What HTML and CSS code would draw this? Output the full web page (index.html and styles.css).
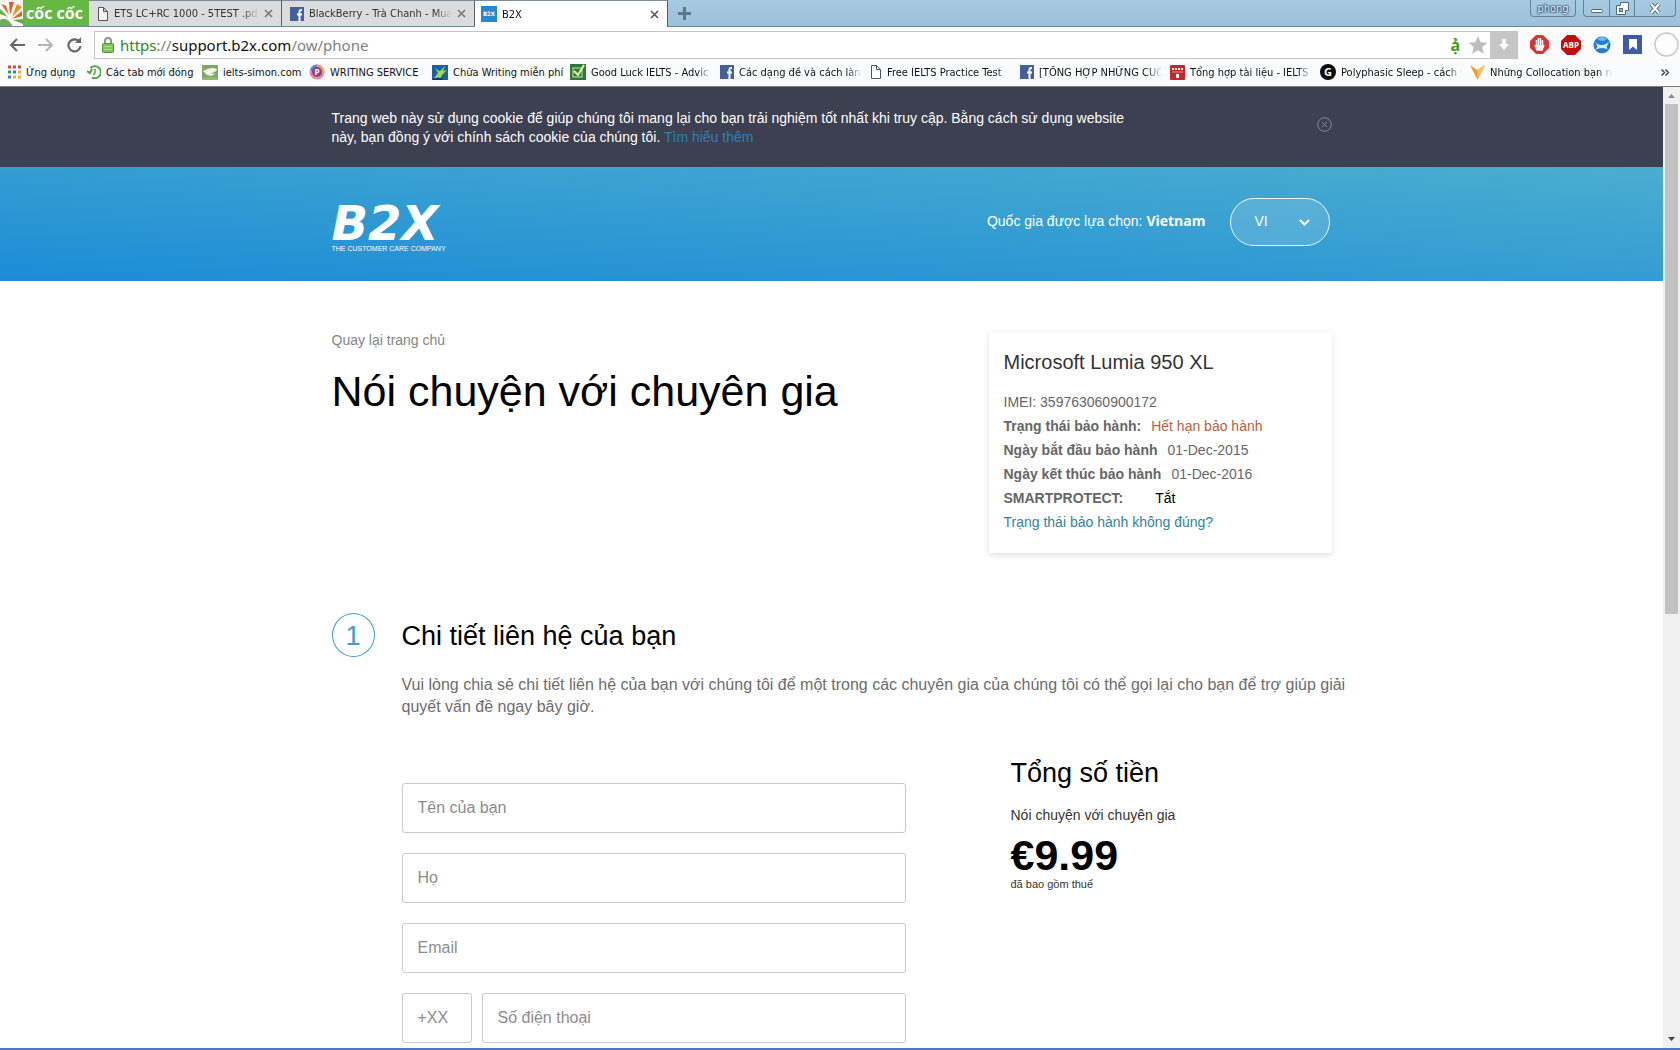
FILE: index.html
```
<!DOCTYPE html>
<html lang="vi">
<head>
  <meta charset="UTF-8" />
  <meta name="viewport" content="width=device-width, initial-scale=1.0" />
  <title>B2X</title>
  <link rel="stylesheet" href="styles.css">
</head>
<body>
<div class="tabstrip">
  <div class="brand">
    <svg width="23" height="26" viewBox="0 0 23 26"><rect width="23" height="26" fill="#fbfaf0"/><path d="M0 20Q6 16 12 25L12 26H0Z" fill="#6fae5b"/><path d="M1 4l5 2 3 9z" fill="#e4572e"/><path d="M9 2h5l-4 13z" fill="#e4572e"/><path d="M17 4l5 3-10 10z" fill="#f08a24"/><path d="M22 11v5l-10 3z" fill="#e2632c"/><path d="M13 20l10-1v5z" fill="#5fae3b"/><path d="M0 9l8 8-8-3z" fill="#5fae3b"/></svg>
    <span>cốc cốc</span>
  </div>
  <div class="tab">
    <svg width="12" height="14" viewBox="0 0 12 14"><path d="M1.500.5h5l4 4v9h-9zM6.500 .5v4h4" fill="#f4f4f4" stroke="#555"/></svg>
    <span class="fade">ETS LC+RC 1000 - 5TEST .pd</span>
    <button aria-label="Close tab"><svg width="9" height="9" viewBox="0 0 9 9"><path d="M1 1l7 7M8 1L1 8" stroke="#777" stroke-width="1.600"/></svg></button>
  </div>
  <div class="tab">
    <svg width="14" height="14" viewBox="0 0 14 14"><rect width="14" height="14" fill="#43609c"/><path d="M12 3H10.500Q9.500 3 9.500 4.500V14M7 7.500H12" fill="none" stroke="#fff" stroke-width="2"/></svg>
    <span class="fade">BlackBerry - Trà Chanh - Mua</span>
    <button aria-label="Close tab"><svg width="9" height="9" viewBox="0 0 9 9"><path d="M1 1l7 7M8 1L1 8" stroke="#777" stroke-width="1.600"/></svg></button>
  </div>
  <div class="tab active">
    <span class="b2x-icon">B2X</span>
    <span class="fade">B2X</span>
    <button aria-label="Close tab"><svg width="9" height="9" viewBox="0 0 9 9"><path d="M1 1l7 7M8 1L1 8" stroke="#555" stroke-width="1.600"/></svg></button>
  </div>
  <button class="new-tab" aria-label="New tab"><svg width="13" height="13" viewBox="0 0 13 13"><path d="M6.500 0v13M0 6.500h13" stroke="#5f7786" stroke-width="3"/></svg></button>
  <div class="window-tools">
    <button class="user">phong</button>
    <div class="window-buttons">
      <button aria-label="Minimize"><svg width="12" height="14" viewBox="0 0 12 14"><rect x=".5" y="8.500" width="11" height="3" rx="1" fill="#fff" stroke="#4d6878"/></svg></button>
      <button aria-label="Restore"><svg width="13" height="13" viewBox="0 0 13 13"><path d="M4.500 .5h8v8h-3v4h-9v-9h4z" fill="#fff" stroke="#4d6878"/><rect x="3.500" y="6.500" width="3" height="3" fill="#9ec4dc" stroke="#4d6878"/></svg></button>
      <button aria-label="Close"><svg width="12" height="11" viewBox="0 0 12 11"><path d="M2 1l8 9M10 1L2 10" stroke="#4d6878" stroke-width="4"/><path d="M2 1l8 9M10 1L2 10" stroke="#fff" stroke-width="2"/></svg></button>
    </div>
  </div>
</div>

<div class="toolbar">
  <div class="nav-buttons">
    <button aria-label="Back"><svg width="16" height="14" viewBox="0 0 16 14"><path d="M16 7H2M8 1L2 7l6 6" fill="none" stroke="#666" stroke-width="2"/></svg></button>
    <button aria-label="Forward"><svg width="16" height="14" viewBox="0 0 16 14"><path d="M0 7h14M8 1l6 6-6 6" fill="none" stroke="#b4b4b4" stroke-width="2"/></svg></button>
    <button aria-label="Reload"><svg width="15" height="16" viewBox="0 0 15 16"><path d="M13.500 9A6 6 0 1 1 11 3.500" fill="none" stroke="#666" stroke-width="2.200"/><path d="M14 0v6H8z" fill="#666"/></svg></button>
  </div>
  <div class="address">
    <svg width="12" height="16" viewBox="0 0 12 16"><path d="M3 7V4a3 3 0 0 1 6 0v3" fill="none" stroke="#8a9a80" stroke-width="2"/><rect x=".5" y="6.500" width="11" height="9" rx="1" fill="#7cc65a" stroke="#4f9b37"/><path d="M2 9.500h8M2 12.500h8" stroke="#a8de8e"/></svg>
    <p class="url"><span class="secure">https</span>://<span class="host">support.b2x.com</span>/ow/phone</p>
    <span class="accent">ạ̉</span>
    <svg class="star" width="20" height="18" viewBox="0 0 20 18"><path d="M10 0l2.600 6.200 6.900.5-5.300 4.400 1.700 6.700L10 14.200l-5.900 3.600 1.700-6.700L.5 6.700l6.900-.5z" fill="#bdbdbd"/></svg>
    <button class="download" aria-label="Download"><svg width="10" height="11" viewBox="0 0 10 11"><path d="M3 0h4v5h3l-5 6-5-6h3z" fill="#fff"/></svg></button>
  </div>
  <div class="extensions">
    <svg width="19" height="19" viewBox="0 0 19 19"><path d="M6 0h7l6 6v7l-6 6H6l-6-6V6z" fill="#dc3338"/><path d="M6.500 10V5M8.500 10V3M10.500 10V3M12.500 11V5M5 10l2 5h5l2-5" stroke="#fff" stroke-width="1.500" fill="#fff"/></svg>
    <svg width="20" height="20" viewBox="0 0 20 20"><path d="M6 0h8l6 6v8l-6 6H6l-6-6V6z" fill="#c40d0d"/><text x="10" y="13" text-anchor="middle" class="abp">ABP</text></svg>
    <svg width="18" height="18" viewBox="0 0 18 18"><circle cx="9" cy="9" r="8.500" fill="#1e7fd0"/><path d="M4 3Q9-1 14 3Q10 7 4 3" fill="#69bdf2"/><path d="M1 5Q8 13 17 5Q11 12 16 14Q9 10 2 14Q7 11 1 5" fill="#d8eefc"/></svg>
    <svg width="19" height="19" viewBox="0 0 19 19"><rect width="19" height="19" fill="#3f5ba5"/><path d="M6 4h8v11l-4-3.500L6 15z" fill="#fff"/></svg>
    <svg width="25" height="25" viewBox="0 0 25 25"><circle cx="12.500" cy="12.500" r="11.500" fill="#fdfdfd" stroke="#c9c9c9" stroke-width="1.500"/></svg>
  </div>
</div>

<div class="bookmarks">
  <a href="#"><svg width="14" height="14" viewBox="0 0 14 14"><path d="M1 2h3M6 2h3M11 2h3" stroke="#db4a38" stroke-width="3"/><path d="M1 7h3" stroke="#3d9a4b" stroke-width="3"/><path d="M6 7h3M1 12h3" stroke="#3b76d8" stroke-width="3"/><path d="M11 7h3M6 12h3M11 12h3" stroke="#eab030" stroke-width="3"/></svg><span>Ứng dụng</span></a>
  <a href="#"><svg width="14" height="14" viewBox="0 0 14 14"><path d="M3.500 3A6 6 0 1 1 5 12.500M0 6l3 2 2-4" fill="none" stroke="#56a146" stroke-width="2"/><path d="M8 4v4l-2 2" fill="none" stroke="#56a146" stroke-width="1.500"/></svg><span>Các tab mới đóng</span></a>
  <a href="#"><svg width="16" height="15" viewBox="0 0 16 15"><rect width="16" height="15" fill="#7fa865"/><path d="M1 6Q9 1 15 4Q14 8 8 8l5 1q-3 3-8 1z" fill="#f1f6ea"/><path d="M0 13q8-3 16 0v2H0z" fill="#94ba72"/></svg><span>ielts-simon.com</span></a>
  <a href="#"><svg width="16" height="16" viewBox="0 0 16 16"><circle cx="8" cy="8" r="7.500" fill="#e889a2"/><path d="M8 .5A7.500 7.500 0 0 1 15 10L8 8z" fill="#f3a34e"/><path d="M1 6A7.500 7.500 0 0 1 8 .5V8z" fill="#5d86d4"/><circle cx="8" cy="8" r="5" fill="#8e3e91"/><text x="8" y="11" text-anchor="middle" class="small-mark">P</text></svg><span>WRITING SERVICE</span></a>
  <a href="#"><svg width="16" height="15" viewBox="0 0 16 15"><rect width="16" height="15" fill="#17639e"/><path d="M2 13l4-5-3-5 4 3 1 0 5-5-2 5 4-1-5 5-2 4z" fill="#a3d552"/><path d="M0 15q6-5 12 0z" fill="#0b3a6b"/></svg><span>Chữa Writing miễn phí</span></a>
  <a href="#"><svg width="16" height="16" viewBox="0 0 16 16"><rect width="16" height="16" fill="#2e7a3c"/><rect x="3" y="4" width="9" height="9" fill="none" stroke="#c7e8b1"/><path d="M4 7l4 4 6-10" fill="none" stroke="#e9f59c" stroke-width="2"/></svg><span class="fade">Good Luck IELTS - Advic</span></a>
  <a href="#"><svg width="14" height="14" viewBox="0 0 14 14"><rect width="14" height="14" fill="#43609c"/><path d="M12 3H10.500Q9.500 3 9.500 4.500V14M7 7.500H12" fill="none" stroke="#fff" stroke-width="2"/></svg><span class="fade">Các dạng đề và cách làn</span></a>
  <a href="#"><svg width="12" height="14" viewBox="0 0 12 14"><path d="M1.500 .5h5l4 4v9h-9zM6.500 .5v4h4" fill="#fff" stroke="#555"/></svg><span class="fade">Free IELTS Practice Test</span></a>
  <a href="#"><svg width="14" height="14" viewBox="0 0 14 14"><rect width="14" height="14" fill="#43609c"/><path d="M12 3H10.500Q9.500 3 9.500 4.500V14M7 7.500H12" fill="none" stroke="#fff" stroke-width="2"/></svg><span class="fade">[TỔNG HỢP NHỮNG CUỐ</span></a>
  <a href="#"><svg width="15" height="15" viewBox="0 0 15 15"><rect width="15" height="15" rx="1" fill="#c8252c"/><path d="M2 4h11" stroke="#fff" stroke-width="2" stroke-dasharray="2 1"/><path d="M2 7h11" stroke="#e98a8a"/><rect x="6" y="9" width="3" height="4" fill="#fff"/></svg><span class="fade">Tổng hợp tài liệu - IELTS</span></a>
  <a href="#"><svg width="16" height="16" viewBox="0 0 16 16"><circle cx="8" cy="8" r="8" fill="#0c0c0c"/><text x="8" y="12" text-anchor="middle" class="round-mark">G</text></svg><span class="fade">Polyphasic Sleep - cách v</span></a>
  <a href="#"><svg width="15" height="15" viewBox="0 0 15 15"><path d="M0 0l7.500 5L15 0 7.500 15z" fill="#eda12f"/><path d="M7.500 5v10L15 0z" fill="#f7be5c"/></svg><span class="fade">Những Collocation bạn n</span></a>
  <button class="more" aria-label="More bookmarks"><svg width="8" height="7" viewBox="0 0 8 7"><path d="M.5.5l3 3-3 3M4.500 .5l3 3-3 3" fill="none" stroke="#444" stroke-width="1.500"/></svg></button>
</div>

<div class="viewport">
  <div class="page">
    <div class="cookie-bar">
      <div class="wrap">
        <p>Trang web này sử dụng cookie để giúp chúng tôi mang lại cho bạn trải nghiệm tốt nhất khi truy cập. Bằng cách sử dụng website này, bạn đồng ý với chính sách cookie của chúng tôi. <a href="#">Tìm hiểu thêm</a></p>
        <button aria-label="Close"><svg width="15" height="15" viewBox="0 0 15 15"><circle cx="7.500" cy="7.500" r="6.800" fill="none" stroke="#878a96"/><path d="M5 5l5 5M10 5l-5 5" stroke="#878a96"/></svg></button>
      </div>
    </div>
    <header class="site-header">
      <div class="wrap">
        <a class="logo" href="#">
          <span class="logo-name">B2X</span>
          <span class="logo-tagline">THE CUSTOMER CARE COMPANY</span>
        </a>
        <div class="region">
          <label for="language">Quốc gia được lựa chọn: <strong>Vietnam</strong></label>
          <div class="select-box">
            <select id="language"><option>VI</option><option>EN</option></select>
            <svg width="11" height="7" viewBox="0 0 11 7"><path d="M1 1l4.500 4.500L10 1" fill="none" stroke="#fff" stroke-width="2"/></svg>
          </div>
        </div>
      </div>
    </header>
    <main class="wrap">
      <section class="intro">
        <div>
          <a class="back" href="#">Quay lại trang chủ</a>
          <h1>Nói chuyện với chuyên gia</h1>
        </div>
        <div class="device-card">
          <h2>Microsoft Lumia 950 XL</h2>
          <p>IMEI: 359763060900172</p>
          <p><strong>Trạng thái bảo hành:</strong><span class="expired">Hết hạn bảo hành</span></p>
          <p><strong>Ngày bắt đầu bảo hành</strong><span>01-Dec-2015</span></p>
          <p><strong>Ngày kết thúc bảo hành</strong><span>01-Dec-2016</span></p>
          <p class="protect"><strong>SMARTPROTECT:</strong><span>Tắt</span></p>
          <a href="#">Trạng thái bảo hành không đúng?</a>
        </div>
      </section>
      <section class="step">
        <div class="step-number">1</div>
        <div class="step-body">
          <h2>Chi tiết liên hệ của bạn</h2>
          <p class="lead">Vui lòng chia sẻ chi tiết liên hệ của bạn với chúng tôi để một trong các chuyên gia của chúng tôi có thể gọi lại cho bạn để trợ giúp giải quyết vấn đề ngay bây giờ.</p>
          <div class="columns">
            <form>
              <input type="text" aria-label="Tên của bạn" placeholder="Tên của bạn" />
              <input type="text" aria-label="Họ" placeholder="Họ" />
              <input type="email" aria-label="Email" placeholder="Email" />
              <div class="phone">
                <input type="text" class="code" aria-label="+XX" placeholder="+XX" />
                <input type="tel" aria-label="Số điện thoại" placeholder="Số điện thoại" />
              </div>
            </form>
            <aside>
              <h2>Tổng số tiền</h2>
              <p>Nói chuyện với chuyên gia</p>
              <p class="price">€9.99</p>
              <p class="tax">đã bao gồm thuế</p>
            </aside>
          </div>
        </div>
      </section>
    </main>
  </div>
  <div class="scrollbar">
    <svg width="7" height="4" viewBox="0 0 7 4"><path d="M0 4L3.500 0 7 4z" fill="#8b8b8b"/></svg>
    <div class="track"><div class="thumb"></div></div>
    <svg width="7" height="4" viewBox="0 0 7 4"><path d="M0 0h7L3.500 4z" fill="#444"/></svg>
  </div>
</div>
</body>
</html>
```
FILE: styles.css
```
:root {
  --chrome-font: "DejaVu Sans Condensed", "DejaVu Sans", sans-serif;
  --page-font: "Liberation Sans", Arial, sans-serif;
  --blue: #3d9cc8;
}
* {
  box-sizing: border-box;
}
html, body {
  margin: 0;
  padding: 0;
}
body {
  height: 100vh;
  display: flex;
  flex-direction: column;
  overflow: hidden;
  font-family: var(--page-font);
  font-size: 14px;
  background: #fff;
  color: #000;
  border-bottom: 2px solid #4a76c4;
}
h1, h2, p {
  margin: 0;
  font-weight: normal;
}
a {
  text-decoration: none;
}
button {
  display: flex;
  align-items: center;
  justify-content: center;
  padding: 0;
  border: none;
  background: none;
  cursor: pointer;
}
svg {
  flex: none;
}

/* tabs */
.tabstrip {
  display: flex;
  height: 27px;
  flex: none;
  background: linear-gradient(#a6cbe2, #9bc0d8);
  border-bottom: 1px solid #6d8797;
  font-family: var(--chrome-font);
  font-size: 11px;
}
.brand {
  display: flex;
  width: 89px;
  align-items: center;
  gap: 3px;
  background: #66b844;
  color: #fff;
  font-family: "Open Sans", sans-serif;
  font-size: 16px;
  font-weight: bold;
  line-height: 26px;
  white-space: nowrap;
}
.tab {
  display: flex;
  align-items: center;
  gap: 5px;
  width: 193px;
  padding: 0 8px;
  background: #dcdcdc;
  border-top: 1px solid #7d8f9b;
  border-right: 1px solid #555e66;
  color: #333;
}
.tab.active {
  height: 27px;
  background: #fff;
  color: #111;
  padding-left: 6px;
}
.b2x-icon {
  width: 16px;
  height: 16px;
  background: #2489d0;
  color: #fff;
  font-size: 6px;
  font-weight: bold;
  line-height: 16px;
  text-align: center;
}
.fade {
  flex: 1;
  min-width: 0;
  overflow: hidden;
  white-space: nowrap;
  mask-image: linear-gradient(to right, #000 88%, transparent);
}
.new-tab {
  width: 32px;
}
.window-tools {
  display: flex;
  gap: 7px;
  margin-left: auto;
  padding-right: 4px;
}
.user, .window-buttons {
  height: 17px;
  border: 1px solid #648396;
  border-top: none;
  border-radius: 0 0 4px 4px;
}
.user {
  width: 46px;
  font-family: var(--chrome-font);
  font-size: 11px;
  color: #fff;
  text-shadow: 0 0 2px #223, 0 0 2px #223, 0 0 1px #223;
}
.window-buttons {
  display: grid;
  grid-template-columns: 25px 25px 41px;
}
.window-buttons button + button {
  border-left: 1px solid #648396;
}

/* toolbar */
.toolbar {
  display: flex;
  align-items: center;
  height: 35px;
  flex: none;
  padding-right: 1px;
  background: #fcfcfc;
}
.nav-buttons {
  display: flex;
  gap: 13px;
  width: 94px;
  padding-left: 9px;
}
.address {
  display: flex;
  flex: 1;
  align-items: center;
  height: 28px;
  padding-left: 7px;
  border: 1px solid #c4c4c4;
  background: #fff;
  font-family: "Noto Sans", sans-serif;
  font-size: 15px;
  color: #808080;
}
.url {
  flex: 1;
  padding-left: 6px;
  line-height: 26px;
}
.secure {
  color: #2a8a2a;
}
.host {
  color: #111;
}
.accent {
  color: #3f9c1c;
  font-size: 16px;
  font-weight: bold;
  line-height: 26px;
}
.star {
  margin: 0 2px 0 8px;
}
.download {
  width: 27px;
  height: 26px;
  background: #c6c6c6;
}
.extensions {
  display: flex;
  align-items: center;
  gap: 12px;
  padding-left: 12px;
}
.abp, .small-mark {
  font: bold 8px "Open Sans", sans-serif;
  fill: #fff;
}
.round-mark {
  font: bold 11px "Open Sans", sans-serif;
  fill: #fff;
}

/* bookmarks */
.bookmarks {
  display: grid;
  grid-template-columns: 80px 115px 107px 123px 138px repeat(7, 150px) 1fr;
  align-items: center;
  height: 25px;
  flex: none;
  padding: 0 11px 4px 7px;
  background: #fafbfc;
  border-bottom: 1px solid #7b7d86;
  font-family: var(--chrome-font);
  font-size: 11px;
}
.bookmarks a {
  display: flex;
  align-items: center;
  gap: 5px;
  padding-right: 8px;
  color: #111;
  white-space: nowrap;
}
.more {
  justify-self: end;
}

/* page */
.viewport {
  display: flex;
  flex: 1;
  min-height: 0;
}
.page {
  flex: 1;
  overflow: hidden;
}
.wrap {
  width: 100%;
  max-width: 1000px;
  margin: 0 auto;
}
.cookie-bar {
  padding: 22px 0 20px;
  background: #3c4050;
  color: #fff;
}
.cookie-bar .wrap {
  display: flex;
  justify-content: space-between;
  align-items: flex-start;
}
.cookie-bar p {
  max-width: 815px;
  line-height: 19px;
}
.cookie-bar a {
  color: #2b80b6;
}
.cookie-bar button {
  margin-top: 8px;
}
.site-header {
  background: linear-gradient(to top right, #1c8cd6, #4badcf);
  color: #fff;
}
.site-header .wrap {
  display: flex;
  justify-content: space-between;
  align-items: flex-start;
  height: 114px;
}
.logo {
  display: flex;
  flex-direction: column;
  padding-top: 35px;
  color: #fff;
}
.logo-name {
  font-family: "DejaVu Sans", sans-serif;
  font-size: 48px;
  font-style: italic;
  font-weight: bold;
  line-height: 42px;
}
.logo-tagline {
  font-size: 7px;
  line-height: 10px;
}
.region {
  display: flex;
  align-items: center;
  gap: 24px;
  padding: 31px 2px 0 0;
}
.region label {
  padding-bottom: 4px;
}
.region strong {
  font-family: "Open Sans", sans-serif;
}
.select-box {
  position: relative;
}
.select-box select {
  appearance: none;
  width: 100px;
  height: 48px;
  padding: 0 24px 2px;
  border: 1px solid #e8f5fb;
  border-radius: 24px;
  background: rgba(255, 255, 255, 0.14);
  color: #fff;
  font-family: var(--page-font);
  font-size: 14px;
}
.select-box svg {
  position: absolute;
  right: 20px;
  top: 21px;
  pointer-events: none;
}
.intro {
  display: flex;
  justify-content: space-between;
  padding-top: 50px;
}
.back {
  color: #858585;
  line-height: 18px;
}
h1 {
  margin-top: 17px;
  font-size: 43px;
  line-height: 50px;
}
.device-card {
  width: 343px;
  margin-top: 1px;
  padding: 14px 15px 19px;
  border-radius: 2px;
  box-shadow: 0 2px 6px rgba(0, 0, 0, 0.13);
  color: #666;
  line-height: 24px;
}
.device-card h2 {
  margin-bottom: 12px;
  font-size: 20px;
  line-height: 32px;
  color: #333;
}
.device-card p {
  display: flex;
  gap: 10px;
}
.device-card .expired {
  color: #b8623f;
}
.device-card .protect {
  gap: 32px;
}
.protect span {
  color: #000;
}
.device-card a {
  color: #31849b;
}
.step {
  display: flex;
  gap: 27px;
  padding-top: 60px;
}
.step-number {
  width: 43px;
  height: 44px;
  flex: none;
  border: 1px solid var(--blue);
  border-radius: 50%;
  color: var(--blue);
  font-size: 27px;
  line-height: 44px;
  text-align: center;
}
.step-body {
  flex: 1;
}
.step-body h2 {
  font-size: 27px;
  line-height: 46px;
}
.lead {
  margin: 15px -24px 0 0;
  font-size: 16px;
  line-height: 22px;
  color: #6c6c6c;
}
.columns {
  display: flex;
  gap: 105px;
  margin-top: 32px;
}
form {
  display: flex;
  flex-direction: column;
  gap: 20px;
  width: 504px;
  padding-top: 33px;
}
input {
  width: 100%;
  height: 50px;
  flex: none;
  padding: 0 15px;
  border: 1px solid #c8c8c8;
  border-radius: 3px;
  background: #fff;
  font-family: var(--page-font);
  font-size: 16px;
}
input::placeholder {
  color: #8c8c8c;
}
.phone {
  display: flex;
  gap: 10px;
}
.phone input {
  flex: 1;
}
.phone .code {
  flex: none;
  width: 70px;
}
aside {
  color: #333;
}
aside h2 {
  margin-bottom: 9px;
  color: #000;
}
aside p {
  line-height: 20px;
}
aside .price {
  margin-top: 8px;
  color: #000;
  font-size: 43px;
  font-weight: bold;
  line-height: 44px;
}
aside .tax {
  font-size: 11px;
  line-height: 14px;
}

/* scrollbar */
.scrollbar {
  display: flex;
  flex-direction: column;
  align-items: center;
  width: 17px;
  flex: none;
  padding: 7px 0;
  background: #f0f0f0;
}
.track {
  width: 13px;
  flex: 1;
  margin: 6px 0;
}
.thumb {
  height: 55%;
  background: #c1c1c1;
}
```
